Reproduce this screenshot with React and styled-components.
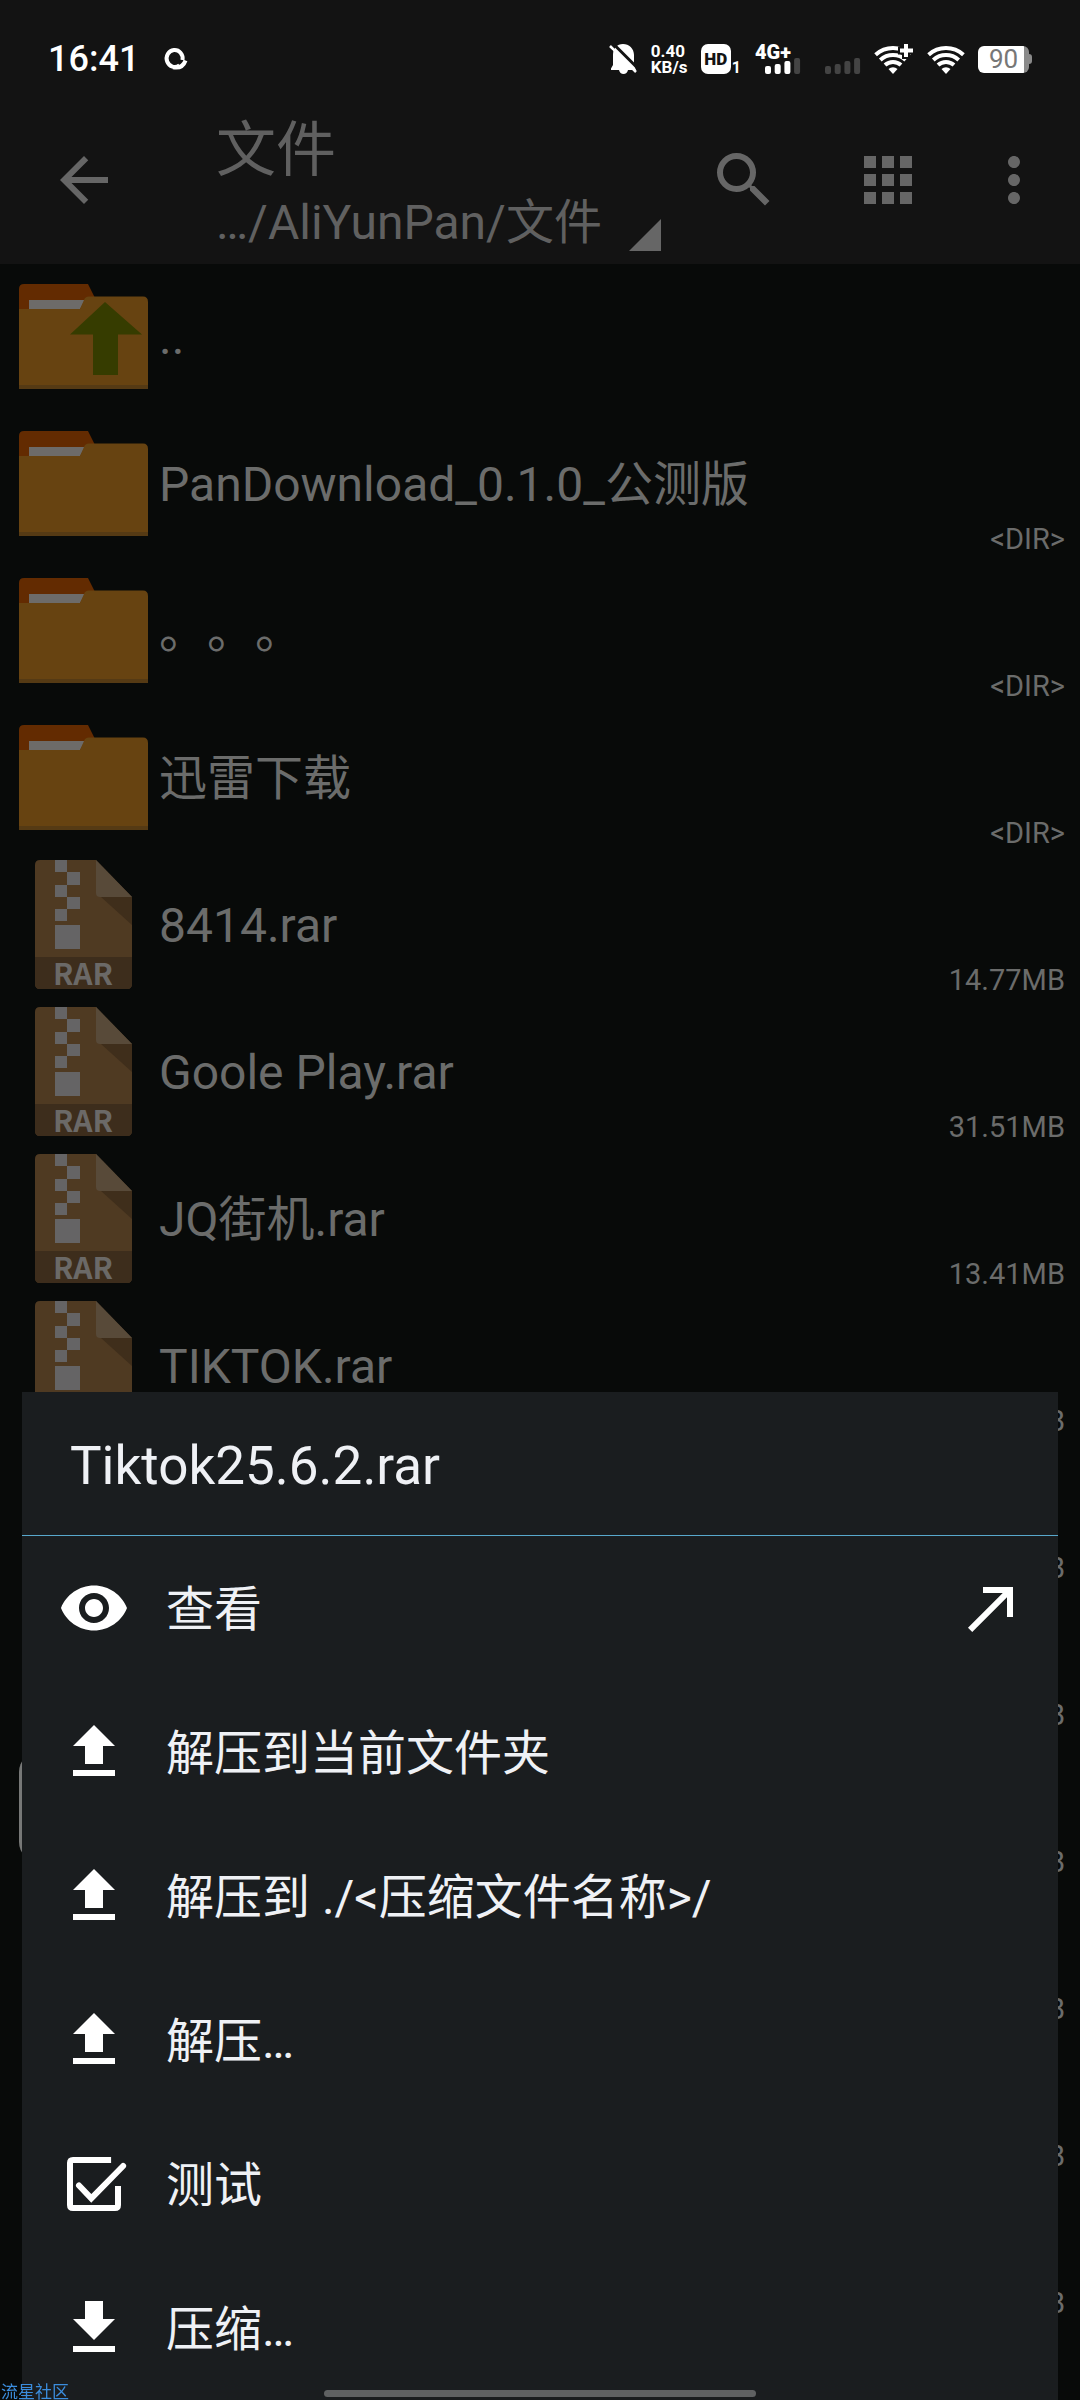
import React from "react";
import styled, { createGlobalStyle, css } from "styled-components";
import {
  MdApps,
  MdArrowBack,
  MdCallMade,
  MdMoreVert,
  MdSearch,
  MdVisibility,
} from "react-icons/md";

const GlobalStyle = createGlobalStyle`
  * {
    box-sizing: border-box;
  }

  body {
    margin: 0;
    background-color: #080a09;
    font-family: Roboto, "Noto Sans CJK SC", sans-serif;
    text-spacing-trim: space-all;
  }

  svg {
    display: block;
    flex-shrink: 0;
    overflow: visible;
  }
`;

const resetButton = css`
  background: none;
  border: none;
  color: inherit;
  cursor: pointer;
  font-family: inherit;
  margin: 0;
  padding: 0;
  text-align: left;
`;

const Page = styled.div`
  min-height: 100vh;
  overflow: hidden;
`;

/* Status bar */
const StatusBar = styled.div`
  align-items: center;
  background-color: #131313;
  color: #ffffff;
  display: flex;
  height: 96px;
  justify-content: space-between;
  padding: 22px 48px 0 48px;
`;

const StatusGroup = styled.div`
  align-items: center;
  display: flex;
  gap: ${(props) => props.$gap}px;
`;

const Clock = styled.span`
  font-size: 36px;
  font-weight: 500;
  line-height: 40px;
`;

const Speed = styled.div`
  display: flex;
  flex-direction: column;
  font-size: 17px;
  font-weight: 700;
  line-height: 16px;
  width: 36px;
`;

const HdGroup = styled.div`
  align-items: flex-end;
  display: flex;
  font-size: 16px;
  font-weight: 700;
  gap: 1px;
  line-height: 12px;
`;

const HdBadge = styled.span`
  background-color: #ffffff;
  border-radius: 7px;
  color: #131313;
  font-size: 17px;
  font-weight: 900;
  height: 30px;
  line-height: 30px;
  text-align: center;
  width: 30px;
`;

const Network = styled.div`
  align-items: flex-end;
  display: flex;
  height: 30px;
  padding-left: 10px;
  position: relative;
`;

const NetworkLabel = styled.span`
  font-size: 20px;
  font-weight: 900;
  left: 0;
  line-height: 16px;
  position: absolute;
  top: 0;
`;

const Battery = styled.div`
  align-items: center;
  display: flex;
`;

const BatteryBody = styled.span`
  background: linear-gradient(to right, #ffffff 90%, #8a8a8a 90%);
  border-radius: 6px;
  color: #777777;
  font-size: 26px;
  height: 27px;
  line-height: 27px;
  text-align: center;
  width: 51px;
`;

const BatteryTip = styled.span`
  background-color: #8a8a8a;
  border-radius: 0 3px 3px 0;
  height: 10px;
  width: 3px;
`;

/* Toolbar */
const Toolbar = styled.header`
  align-items: center;
  background-color: #131313;
  color: #666666;
  display: flex;
  height: 168px;
  padding-right: 12px;
`;

const ToolButton = styled.button`
  ${resetButton}
  align-items: center;
  display: flex;
  flex-shrink: 0;
  height: 168px;
  justify-content: center;
  width: ${(props) => props.$width}px;
`;

const PathButton = styled.button`
  ${resetButton}
  align-items: flex-end;
  color: #606060;
  display: flex;
  flex: 1;
  gap: 27px;
  margin-left: 48px;
  min-width: 0;
  padding-top: 6px;
`;

const PathTexts = styled.span`
  display: flex;
  flex-direction: column;
`;

const FolderTitle = styled.span`
  font-size: 60px;
  line-height: 80px;
`;

const FolderPath = styled.span`
  font-size: 48px;
  line-height: 64px;
  white-space: nowrap;
`;

const Triangle = styled.svg`
  margin-bottom: 4px;
`;

/* File list */
const FileList = styled.ul`
  list-style: none;
  margin: 0;
  padding: 0;
`;

const FileRow = styled.li`
  color: #6b6c6b;
  display: flex;
  gap: 11px;
  height: 147px;
  padding: 8px 15px 0 19px;
`;

const FileIcon = styled.div`
  align-items: center;
  display: flex;
  flex-shrink: 0;
  height: 129px;
  justify-content: center;
  width: 129px;
`;

const FileName = styled.span`
  flex: 1;
  font-size: 48px;
  line-height: 131px;
  overflow: hidden;
  white-space: nowrap;
`;

const FileSize = styled.span`
  align-self: flex-end;
  font-size: 29px;
  line-height: 37px;
`;

const EdgeHandle = styled.div`
  background-color: #777877;
  border-radius: 20px;
  bottom: 538px;
  height: 110px;
  left: 19px;
  position: fixed;
  width: 110px;
`;

/* Bottom sheet */
const Sheet = styled.section`
  background-color: #1a1d1f;
  bottom: 0;
  color: #eff1f5;
  left: 22px;
  position: fixed;
  right: 22px;
`;

const SheetTitle = styled.h2`
  border-bottom: 1px solid #58a8cc;
  font-size: 53px;
  font-weight: 400;
  height: 144px;
  line-height: 149px;
  margin: 0;
  padding: 0 48px;
`;

const MenuItem = styled.button`
  ${resetButton}
  align-items: center;
  display: flex;
  font-size: 48px;
  gap: 36px;
  height: 144px;
  padding: 0 30px 0 36px;
  width: 100%;

  svg {
    color: #ffffff;
  }
`;

const MenuLabel = styled.span`
  flex: 1;
  line-height: 72px;
  padding-top: 4px;
`;

const HomeBar = styled.div`
  background-color: #5f6162;
  border-radius: 4px;
  bottom: 3px;
  height: 7px;
  left: 30%;
  position: fixed;
  right: 30%;
`;

const Watermark = styled.span`
  bottom: 0;
  color: #3b8ddd;
  font-size: 17px;
  left: 1px;
  line-height: 15px;
  position: fixed;
`;

function LoopIcon() {
  return (
    <svg width="24" height="24" viewBox="0 0 24 24" fill="none" stroke="#fff">
      <path d="M18.500 13A8 8.500 0 1 0 15.500 18.200" strokeWidth="4" />
      <path d="M9 20.300Q18.500 22 21.500 13.500" strokeWidth="4" />
    </svg>
  );
}

function BellOffIcon() {
  return (
    <svg width="27" height="30" viewBox="0 0 27 30">
      <path
        d="M13 0C19 0 24 4.500 24 11V21L26 26H18Q17 30 13.500 30T9 26H1V24.500L3 21V11C3 4.500 7 0 13 0Z"
        fill="#fff"
      />
      <path d="M2.500 -1L28.500 25" stroke="#131313" strokeWidth="3" />
      <path d="M0 2L26 28" stroke="#fff" strokeWidth="2.500" />
      <path d="M-1 4L-1 11H3V7Z" fill="#131313" />
    </svg>
  );
}

function SignalBars({ level }) {
  const tops = [8, 6, 3, 0];
  return (
    <svg width="36" height="16" viewBox="0 0 36 16">
      {tops.map((top, i) => (
        <rect
          key={top}
          x={i * 9.7}
          y={top}
          width="6"
          height={16 - top}
          rx="2"
          fill={i < level ? "#fff" : "#444"}
        />
      ))}
    </svg>
  );
}

function WifiIcon({ plus }) {
  return (
    <svg
      width={plus ? 39 : 36}
      height="30"
      viewBox={plus ? "0 0 39 30" : "0 0 36 30"}
    >
      <g fill="none" stroke="#fff" strokeWidth="4">
        <path d="M0.600 10.700A26 26 0 0 1 35.400 10.700" />
        <path d="M5.300 15.900A19 19 0 0 1 30.700 15.900" />
        <path d="M10 21.100A12 12 0 0 1 26 21.100" />
      </g>
      <path d="M18 30L13.500 25A7 7 0 0 1 22.500 25Z" fill="#fff" />
      {plus && (
        <g fill="none">
          <path d="M31 -2V15M23 6.500H38" stroke="#131313" strokeWidth="8" />
          <path d="M31 0V13M25 6.500H38" stroke="#fff" strokeWidth="4" />
        </g>
      )}
    </svg>
  );
}

function FolderIcon({ up }) {
  return (
    <svg width="129" height="105" viewBox="0 0 129 105">
      <path d="M0 30V5Q0 0 5 0H69L76 14V30Z" fill="#632b01" />
      <path d="M10 16H66L61 25H10Z" fill="#6d6b69" />
      <path
        d="M0 25H61L65 16Q66 12.500 70 12.500H124Q129 12.500 129 18V105H0Z"
        fill="#674311"
      />
      <path d="M0 101H129V105H0Z" fill="#553a14" />
      {up && <path d="M86 18L123 50.500H99V91H74V50.500H51Z" fill="#363c00" />}
    </svg>
  );
}

function RarIcon() {
  return (
    <svg width="97" height="129" viewBox="0 0 97 129">
      <path
        d="M5 0H61L97 37V124Q97 129 92 129H5Q0 129 0 124V5Q0 0 5 0Z"
        fill="#4f3a22"
      />
      <path d="M0 97H97V124Q97 129 92 129H5Q0 129 0 124Z" fill="#3d2d1c" />
      <path d="M66 37H97V65Z" fill="#3f2e1b" />
      <path d="M61 0L97 37H65Q61 37 61 33Z" fill="#584a39" />
      <g fill="#656465">
        <rect x="20" y="0" width="12" height="12" />
        <rect x="32" y="12" width="13" height="13" />
        <rect x="20" y="25" width="12" height="12" />
        <rect x="32" y="37" width="13" height="12" />
        <rect x="20" y="49" width="12" height="12" />
        <rect x="20" y="65" width="25" height="24" />
      </g>
      <text
        x="48"
        y="125"
        fill="#6b6967"
        fontFamily="'Noto Sans CJK SC', sans-serif"
        fontSize="30"
        fontWeight="700"
        textAnchor="middle"
      >
        RAR
      </text>
    </svg>
  );
}

function ExtractIcon() {
  return (
    <svg width="72" height="72" viewBox="0 0 24 24" fill="currentColor">
      <path d="M9 16h6v-6h4l-7-7-7 7h4zM5 18h14v2H5z" />
    </svg>
  );
}

function CompressIcon() {
  return (
    <svg width="72" height="72" viewBox="0 0 24 24" fill="currentColor">
      <path d="M19 9h-4V3H9v6H5l7 7zM5 18h14v2H5z" />
    </svg>
  );
}

function TestIcon() {
  return (
    <svg
      width="72"
      height="72"
      viewBox="0 0 24 24"
      fill="none"
      stroke="currentColor"
      strokeWidth="2"
    >
      <path d="M17.700 4H5Q4 4 4 5V19Q4 20 5 20H19Q20 20 20 19V12.700" />
      <path d="M7 12.500L11.100 16.800L21.700 6" strokeLinecap="round" />
    </svg>
  );
}

const icons = {
  up: <FolderIcon up />,
  folder: <FolderIcon />,
  rar: <RarIcon />,
};

const files = [
  { icon: "up", name: ".." },
  { icon: "folder", name: "PanDownload_0.1.0_公测版", size: "<DIR>" },
  { icon: "folder", name: "。。。", size: "<DIR>" },
  { icon: "folder", name: "迅雷下载", size: "<DIR>" },
  { icon: "rar", name: "8414.rar", size: "14.77MB" },
  { icon: "rar", name: "Goole Play.rar", size: "31.51MB" },
  { icon: "rar", name: "JQ街机.rar", size: "13.41MB" },
  { icon: "rar", name: "TIKTOK.rar", size: "MB" },
  { icon: "rar", size: "MB" },
  { icon: "rar", size: "MB" },
  { icon: "rar", size: "MB" },
  { icon: "rar", size: "MB" },
  { icon: "rar", size: "MB" },
  { icon: "rar", size: "MB" },
];

const actions = [
  {
    icon: <MdVisibility size={72} />,
    label: "查看",
    extra: <MdCallMade size={72} />,
  },
  { icon: <ExtractIcon />, label: "解压到当前文件夹" },
  { icon: <ExtractIcon />, label: "解压到 ./<压缩文件名称>/" },
  { icon: <ExtractIcon />, label: "解压…" },
  { icon: <TestIcon />, label: "测试" },
  { icon: <CompressIcon />, label: "压缩…" },
];

export default function App() {
  return (
    <Page>
      <GlobalStyle />

      <StatusBar>
        <StatusGroup $gap={25}>
          <Clock>16:41</Clock>
          <LoopIcon />
        </StatusGroup>
        <StatusGroup $gap={14}>
          <BellOffIcon />
          <Speed>
            <span>0.40</span>
            <span>KB/s</span>
          </Speed>
          <HdGroup>
            <HdBadge>HD</HdBadge>1
          </HdGroup>
          <Network>
            <NetworkLabel>4G+</NetworkLabel>
            <SignalBars level={3} />
          </Network>
          <Network>
            <SignalBars level={0} />
          </Network>
          <WifiIcon plus />
          <WifiIcon />
          <Battery>
            <BatteryBody>90</BatteryBody>
            <BatteryTip />
          </Battery>
        </StatusGroup>
      </StatusBar>

      <Toolbar>
        <ToolButton $width={168} aria-label="返回">
          <MdArrowBack size={72} />
        </ToolButton>
        <PathButton>
          <PathTexts>
            <FolderTitle>文件</FolderTitle>
            <FolderPath>…/AliYunPan/文件</FolderPath>
          </PathTexts>
          <Triangle width="32" height="32" viewBox="0 0 32 32">
            <path d="M32 0V32H0Z" fill="#666" />
          </Triangle>
        </PathButton>
        <ToolButton $width={144} aria-label="搜索">
          <MdSearch size={72} />
        </ToolButton>
        <ToolButton $width={144} aria-label="视图">
          <MdApps size={72} />
        </ToolButton>
        <ToolButton $width={108} aria-label="更多">
          <MdMoreVert size={72} />
        </ToolButton>
      </Toolbar>

      <FileList>
        {files.map((file, index) => (
          <FileRow key={index}>
            <FileIcon>{icons[file.icon]}</FileIcon>
            <FileName>{file.name}</FileName>
            <FileSize>{file.size}</FileSize>
          </FileRow>
        ))}
      </FileList>

      <EdgeHandle />

      <Sheet>
        <SheetTitle>Tiktok25.6.2.rar</SheetTitle>
        {actions.map((action) => (
          <MenuItem key={action.label}>
            {action.icon}
            <MenuLabel>{action.label}</MenuLabel>
            {action.extra}
          </MenuItem>
        ))}
      </Sheet>

      <HomeBar />
      <Watermark>流星社区</Watermark>
    </Page>
  );
}
